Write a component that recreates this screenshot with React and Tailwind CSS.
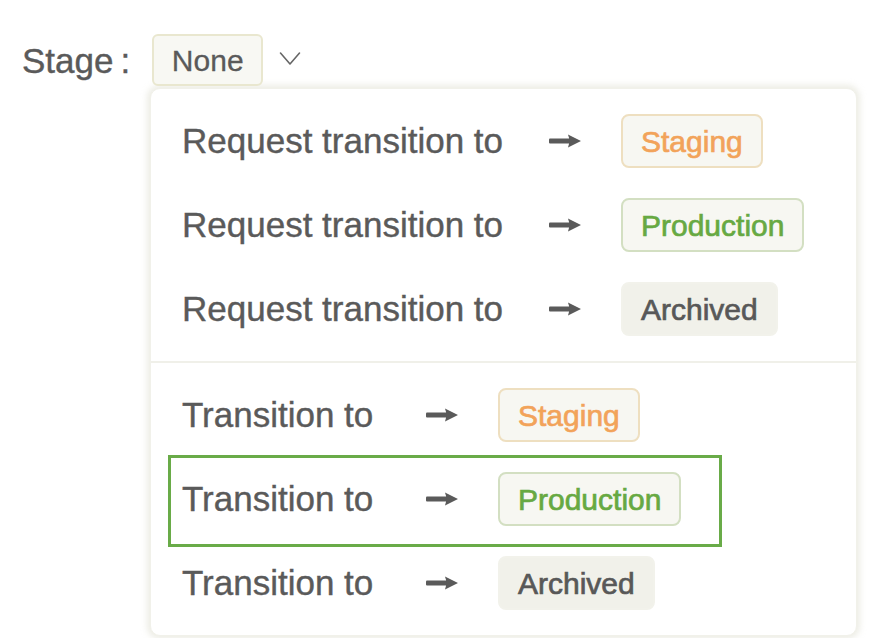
const FONT = { fontFamily: '"Liberation Sans", Arial, sans-serif' }

const BADGES = {
  Staging: 'text-[#f2a35a] border-2 border-[#eedfc0] bg-[#f7f7f2]',
  Production: 'text-[#67a942] border-2 border-[#d3dfc2] bg-[#f7f7f2]',
  Archived: 'text-[#585858] border-2 border-[#f2f2eb] bg-[#f1f1ea]',
}

// heavy right arrow between label and stage
function Arrow() {
  return (
    <svg width="33" height="16" viewBox="0 0 33 16" className="shrink-0">
      <rect x="0" y="5.5" width="22" height="5" rx="1" fill="#5a5a5a" />
      <path d="M19 1.5 L32 8 L19 14.5 Q21.5 8 19 1.5 Z" fill="#5a5a5a" />
    </svg>
  )
}

function Badge({ stage }) {
  return (
    <span className={`inline-flex items-center h-[54px] px-[18px] rounded-lg text-[30px] [-webkit-text-stroke:0.7px_currentColor] ${BADGES[stage]}`}>
      {stage}
    </span>
  )
}

function Row({ label, stage, labelWidth, highlight }) {
  return (
    <div className="relative flex items-center h-[84px] pl-[31px]">
      <span className="shrink-0 text-[35px] text-[#5a5a5a] [-webkit-text-stroke:0.4px_#5a5a5a]" style={{ width: labelWidth }}>{label}</span>
      <Arrow />
      <span className="ml-[39px]"><Badge stage={stage} /></span>
      {highlight && (
        <div className="absolute left-[17px] top-[-2px] w-[554px] h-[92px] border-[3px] border-[#69ab48] pointer-events-none" />
      )}
    </div>
  )
}

export default function App() {
  return (
    <div className="w-[885px] h-[638px] overflow-hidden bg-white pl-[22px] pt-[34px]" style={FONT}>
      <div className="flex items-center h-[52px]">
        <span className="text-[35px] text-[#5a5a5a] leading-none [-webkit-text-stroke:0.4px_#5a5a5a]">Stage<span className="ml-[7px]">:</span></span>
        <div className="ml-[22px] h-[52px] w-[111px] flex items-center justify-center rounded-md border-2 border-[#e9e7cf] bg-[#f8f8f3] text-[30px] text-[#5a5a5a] [-webkit-text-stroke:0.3px_#5a5a5a]">
          None
        </div>
        <svg width="22" height="16" viewBox="0 0 22 16" className="ml-[16px] mt-[-2px]">
          <polyline points="1.5,2 11,13 20.5,2" fill="none" stroke="#666" strokeWidth="1.6" strokeLinecap="round" strokeLinejoin="round" />
        </svg>
      </div>

      <div className="ml-[128px] mt-[2px] w-[707px] rounded-[10px] bg-white border border-[#f1f1ea] shadow-[0_0_6px_3px_rgba(230,230,218,0.7)]">
        <div className="py-[10px]">
          {['Staging', 'Production', 'Archived'].map(s => (
            <Row key={s} label="Request transition to" stage={s} labelWidth={367} />
          ))}
        </div>
        <div className="h-[2px] bg-[#f0f0e9]" />
        <div className="py-[10px]">
          {['Staging', 'Production', 'Archived'].map(s => (
            <Row key={s} label="Transition to" stage={s} labelWidth={244} highlight={s === 'Production'} />
          ))}
        </div>
      </div>
    </div>
  )
}
